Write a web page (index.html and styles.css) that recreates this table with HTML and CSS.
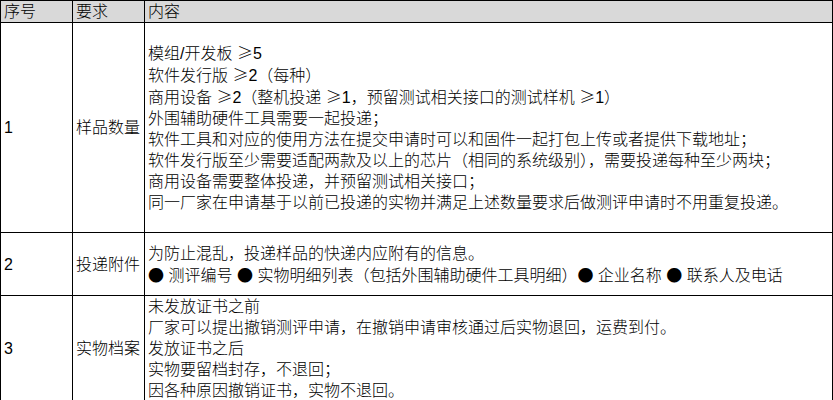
FILE: index.html
```html
<!doctype html>
<html lang="zh-CN">
  <head>
    <meta charset="utf-8">
    <title>样品要求</title>
    <link rel="stylesheet" href="styles.css">
  </head>
  <body>
    <table class="req">
      <colgroup>
        <col class="c-no">
        <col class="c-req">
        <col class="c-body">
      </colgroup>
      <thead>
        <tr class="r-head">
          <th>序号</th>
          <th>要求</th>
          <th>内容</th>
        </tr>
      </thead>
      <tbody>
        <tr class="r-1">
          <td class="num">1</td>
          <td>样品数量</td>
          <td>
            模组/开发板 <span class="sym">≥</span>5<br>
            软件发行版 <span class="sym">≥</span>2（每种）<br>
            商用设备 <span class="sym">≥</span>2（整机投递 <span class="sym">≥</span>1，预留测试相关接口的测试样机 <span class="sym">≥</span>1）<br>
            外围辅助硬件工具需要一起投递；<br>
            软件工具和对应的使用方法在提交申请时可以和固件一起打包上传或者提供下载地址；<br>
            软件发行版至少需要适配两款及以上的芯片（相同的系统级别），需要投递每种至少两块；<br>
            商用设备需要整体投递，并预留测试相关接口；<br>
            同一厂家在申请基于以前已投递的实物并满足上述数量要求后做测评申请时不用重复投递。
          </td>
        </tr>
        <tr class="r-2">
          <td class="num">2</td>
          <td>投递附件</td>
          <td>
            为防止混乱，投递样品的快递内应附有的信息。<br>
            <span class="sym">●</span> 测评编号 <span class="sym">●</span> 实物明细列表（包括外围辅助硬件工具明细）<span class="sym">●</span> 企业名称 <span class="sym">●</span> 联系人及电话
          </td>
        </tr>
        <tr class="r-3">
          <td class="num">3</td>
          <td>实物档案</td>
          <td>
            未发放证书之前<br>
            厂家可以提出撤销测评申请，在撤销申请审核通过后实物退回，运费到付。<br>
            发放证书之后<br>
            实物要留档封存，不退回；<br>
            因各种原因撤销证书，实物不退回。
          </td>
        </tr>
      </tbody>
    </table>
  </body>
</html>
```

FILE: styles.css
```css
body {
  margin: 0;
  background: #fff;
  color: #000;
  font-family: "Liberation Sans", "Noto Sans CJK SC", sans-serif;
  font-size: 16px;
  font-weight: 300;
  line-height: 21px;
}

.req {
  border-collapse: collapse;
  table-layout: fixed;
  width: 833px;
}

.c-no { width: 72px; }
.c-req { width: 72px; }

.req th,
.req td {
  border: 1px solid #000;
  padding: 0 3px;
  text-align: left;
  vertical-align: middle;
  font-weight: 300;
  white-space: nowrap;
}

.req th {
  background: #d9d9d9;
}

.sym {
  font-family: "Noto Sans CJK SC", sans-serif;
}

.r-head { height: 21px; }
.r-1 { height: 210px; }
.r-2 { height: 63px; }
.r-3 { height: 105px; }
```
